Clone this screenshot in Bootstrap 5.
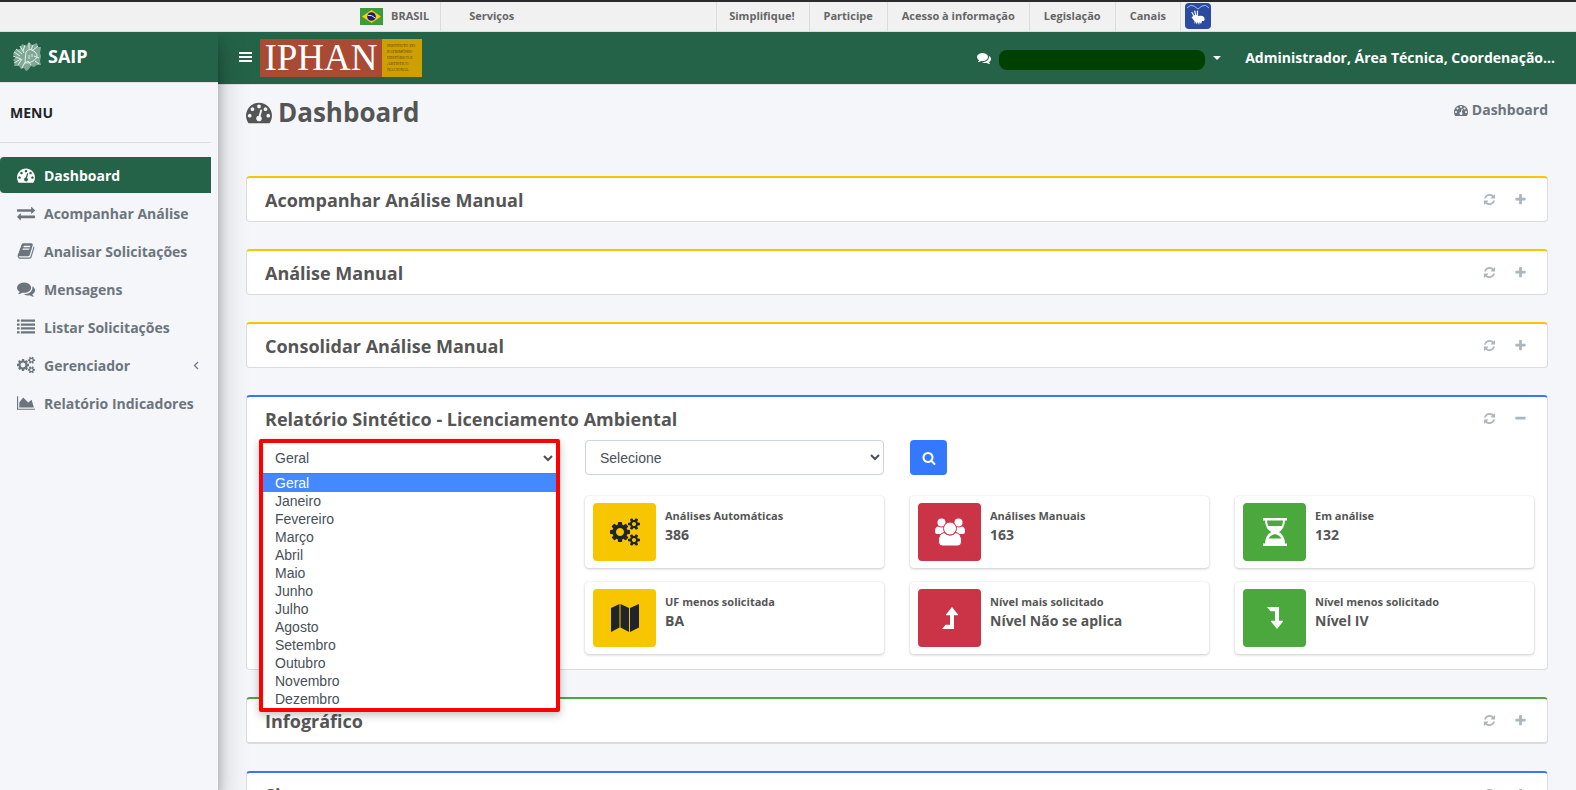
<!DOCTYPE html>
<html lang="pt-BR">
<head>
<meta charset="utf-8">
<meta name="viewport" content="width=device-width, initial-scale=1">
<title>SAIP - Dashboard</title>
<link href="https://cdn.jsdelivr.net/npm/bootstrap@5.3.0/dist/css/bootstrap.min.css" rel="stylesheet">
<style>
  :root { --saip-green: #246348; --ink: #555; --muted: #6c757d; }
  body { font-family: "Open Sans", sans-serif; font-size: 14px; color: var(--ink); background: #f4f6f9; }
  a { text-decoration: none; color: inherit; }
  svg { fill: currentColor; flex: none; display: block; }
  .shell { height: 100vh; overflow: hidden; }

  .gov-bar { height: 32px; flex: none; background: #f1f1f1; border-top: 2px solid #2b2a2c; border-bottom: 1px solid #dcdcdc; font-size: 11px; font-weight: 700; color: #666; }
  .gov-inner { width: 855px; margin-left: 360px; }
  .gov-brand { padding-right: 11px; gap: 8px; border-right: 1px solid #dcdcdc; }
  .gov-link { padding: 0 14px; border-right: 1px solid #dcdcdc; }
  .gov-link:first-child { padding-left: 12px; }
  .gov-links { border-left: 1px solid #dcdcdc; }

  .side { width: 218px; flex: none; z-index: 2; background: #f4f6f9; box-shadow: 0 14px 28px rgba(0,0,0,.25), 0 10px 10px rgba(0,0,0,.22); }
  .side-brand { height: 51px; padding: 0 0 2px 12px; gap: 7px; background: var(--saip-green); border-bottom: 1px solid #dee2e6; color: #fff; font-size: 18px; font-weight: 700; }
  .side-title { padding: 19px 10px; line-height: 21px; color: #212529; font-weight: 700; border-bottom: 1px solid #dcdfe3; margin: 0 7px 14px 0; }
  .side-nav { margin-right: 7px; }
  .side-nav .nav-link { height: 36px; margin-bottom: 2px; padding: 0 12px 0 17px; gap: 9px; font-weight: 700; color: var(--muted); border-radius: 4px 0 0 4px; white-space: nowrap; }
  .side-nav .nav-link.active { background: var(--saip-green); color: #fff; }

  .top { height: 53px; flex: none; padding: 0 21px 1px; background: var(--saip-green); border-bottom: 1px solid #dee2e6; color: #fff; font-weight: 700; }
  .logo { height: 38px; }
  .logo-name { width: 122px; background: #a84a34; color: #fff; font: 37px/38px "Liberation Serif", serif; }
  .logo-full { width: 40px; background: #cda000; color: #5c4208; font: 5px/6px "Liberation Serif", serif; font-variant: small-caps; padding: 4px 0 0 5px; white-space: nowrap; }
  .redacted { width: 206px; height: 20px; border-radius: 8px; background: #004000; }
  .plain-btn { border: 0; background: none; padding: 0; color: inherit; }

  .content-area { padding: 0 28px; }
  .page-head { height: 91px; padding-top: 7px; }
  .page-head h1 { font-size: 26px; line-height: 40px; font-weight: 700; gap: 6px; }
  .crumb { line-height: 36px; font-weight: 700; color: var(--muted); gap: 4px; }

  .panel { background: #fff; border: 1px solid #dcdcdc; border-top: 2px solid #f7c600; border-radius: 4px; margin-bottom: 27px; }
  .panel-blue { border-top-color: #3478ff; }
  .panel-green { border-top-color: #4ba83d; border-bottom-width: 2px; }
  .panel-head { height: 43px; padding: 0 20px 0 18px; }
  .panel-head h2 { font-size: 18px; line-height: 24px; font-weight: 700; }
  .tools { gap: 18px; color: #adb5bd; }
  .g-27 { --bs-gutter-x: 27px; --bs-gutter-y: 0; margin: 0; }
  .g-27 > * { padding-left: 13px; padding-right: 13px; }
  .totals { padding: 21px 0 1px; }

  .pick { height: 35px; padding: 0 14px 0 10px; border: 1px solid #ced4da; border-radius: 4px; background: #fff; color: #495057; font: 14px "Liberation Sans", sans-serif; width: 100%; }
  .go { width: 37px; height: 35px; padding: 0; background: #3478ff; color: #fff; border-radius: 4px; }
  .info { height: 72px; margin-bottom: 14px; padding: 7px 8px; gap: 9px; border-radius: 4px; background: #fff; box-shadow: 0 0 1px rgba(0,0,0,.125), 0 1px 3px rgba(0,0,0,.2); }
  .info-icon { width: 63px; border-radius: 4px; }
  .info-label { font-size: 11px; line-height: 18px; font-weight: 700; padding-top: 4px; }
  .info-value { font-size: 14px; line-height: 20px; font-weight: 700; }
  .bg-y { background: #f7c600; color: #212529; }
  .bg-r { background: #cb3346; color: #fff; }
  .bg-g { background: #4ba83d; color: #fff; }

  .picker { left: -1px; right: -1px; top: -1px; z-index: 3; border: 4px solid #f00; border-radius: 2px; background: #fff; box-shadow: 0 3px 8px rgba(0,0,0,.25); }
  .picker .pick { border: 0; height: 30px; padding-left: 8px; padding-right: 1px; display: block; }
  .month-list { margin: 0; padding: 0; list-style: none; border-top: 1px solid #777; font: 14px/18px "Liberation Sans", sans-serif; color: #495057; }
  .month-list button { width: 100%; text-align: left; padding: 0 12px; line-height: 18px; display: block; }
  .month-list .on { background: #4489ff; color: #fff; }
</style>
</head>
<body>
<svg width="0" height="0" class="position-absolute" aria-hidden="true">
  <symbol id="i-dash" viewBox="0 0 1792 1792"><path d="M384 1152q0-53-37.5-90.5t-90.5-37.5-90.5 37.5-37.5 90.5 37.5 90.5 90.5 37.5 90.5-37.5 37.5-90.5zm192-448q0-53-37.5-90.5t-90.5-37.5-90.5 37.5-37.5 90.5 37.5 90.5 90.5 37.5 90.5-37.5 37.5-90.5zm428 481l101-382q6-26-7.5-48.5t-38.5-29.5-48 6.5-30 39.5l-101 382q-60 5-107 43.5t-63 98.5q-20 77 20 146t117 89 146-20 89-117q16-60-6-117t-72-91zm660-33q0-53-37.5-90.5t-90.5-37.5-90.5 37.5-37.5 90.5 37.5 90.5 90.5 37.5 90.5-37.5 37.5-90.5zm-640-640q0-53-37.5-90.5t-90.5-37.5-90.5 37.5-37.5 90.5 37.5 90.5 90.5 37.5 90.5-37.5 37.5-90.5zm448 192q0-53-37.5-90.5t-90.5-37.5-90.5 37.5-37.5 90.5 37.5 90.5 90.5 37.5 90.5-37.5 37.5-90.5zm320 448q0 261-141 483-19 29-54 29h-1402q-35 0-54-29-141-221-141-483 0-182 71-348t191-286 286-191 348-71 348 71 286 191 191 286 71 348z"/></symbol>
  <symbol id="i-swap" viewBox="0 0 1792 1792"><path d="M1792 1184v192q0 13-9.5 22.5t-22.5 9.5h-1376v192q0 13-9.5 22.5t-22.5 9.5q-12 0-24-10l-319-320q-9-9-9-22 0-14 9-23l320-320q9-9 23-9 13 0 22.5 9.5t9.5 22.5v192h1376q13 0 22.5 9.5t9.5 22.5zm0-544q0 14-9 23l-320 320q-9 9-23 9-13 0-22.5-9.5t-9.5-22.5v-192h-1376q-13 0-22.5-9.5t-9.5-22.5v-192q0-13 9.5-22.5t22.5-9.5h1376v-192q0-14 9-23t23-9q12 0 24 10l319 319q9 9 9 23z"/></symbol>
  <symbol id="i-book" viewBox="0 0 1792 1792"><path d="M1703 478q40 57 18 129l-275 906q-19 64-76.5 107.5t-122.5 43.5h-923q-77 0-148.5-53.5t-99.5-131.5q-24-67-2-127 0-4 3-27t4-37q1-8-3-21.5t-3-19.5q2-11 8-21t16.5-23.5 16.5-23.5q23-38 45-91.5t30-91.5q3-10 .5-30t-.5-28q3-11 17-28t17-23q21-36 42-92t25-90q1-9-2.5-32t.5-28q4-13 22-30.5t22-22.5q19-26 42.5-84.5t27.5-96.5q1-8-3-25.5t-2-26.5q2-8 9-18t18-23 17-21q8-12 16.5-30.5t15-35 16-36 19.5-32 26.5-23.5 36-11.5 47.5 5.5l-1 3q38-9 51-9h761q74 0 114 56t18 130l-274 906q-36 119-71.5 153.5t-128.5 34.5h-869q-27 0-38 15-11 16-1 43 24 70 144 70h923q29 0 56-15.5t35-41.5l300-987q7-22 5-57 38 15 59 43zm-1064 2q-4 13 2 22.5t20 9.5h608q13 0 25.5-9.5t16.5-22.5l21-64q4-13-2-22.5t-20-9.5h-608q-13 0-25.5 9.5t-16.5 22.5zm-83 256q-4 13 2 22.5t20 9.5h608q13 0 25.5-9.5t16.5-22.5l21-64q4-13-2-22.5t-20-9.5h-608q-13 0-25.5 9.5t-16.5 22.5z"/></symbol>
  <symbol id="i-chat" viewBox="0 0 1792 1792"><path d="M1408 768q0 139-94 257t-256.5 186.5-353.5 68.5q-86 0-176-16-124 88-278 128-36 9-86 16h-3q-11 0-20.5-8t-11.5-21q-1-3-1-6.5t.5-6.5 2-6l2.5-5t3.5-5.5 4-5 4.5-5 4-4.5q5-6 23-25t26-29.5 22.5-29 25-38.5 20.5-44q-124-72-195-177t-71-224q0-139 94-257t256.5-186.5 353.5-68.5 353.5 68.5 256.5 186.5 94 257zm384 256q0 120-71 224.5t-195 176.5q10 24 20.5 44t25 38.5 22.5 29 26 29.5 23 25q1 1 4 4.5t4.5 5 4 5 3.5 5.5l2.5 5t2 6 .5 6.5-1 6.5q-3 14-13 22t-22 7q-50-7-86-16-154-40-278-128-90 16-176 16-271 0-472-132 58 4 88 4 161 0 309-45t264-129q125-92 192-212t67-254q0-77-23-152 129 71 204 178t75 230z"/></symbol>
  <symbol id="i-list" viewBox="0 0 1792 1792"><path d="M0 1312h256v224H0zM0 928h256v224H0zM0 544h256v224H0zM0 160h256v224H0zM384 1312h1408v224H384zM384 928h1408v224H384zM384 544h1408v224H384zM384 160h1408v224H384z"/></symbol>
  <symbol id="i-cogs" viewBox="0 0 1920 1792"><path d="M896 896q0-106-75-181t-181-75-181 75-75 181 75 181 181 75 181-75 75-181zm768 512q0-52-38-90t-90-38-90 38-38 90q0 53 37.5 90.5t90.5 37.5 90.5-37.5 37.5-90.5zm0-1024q0-52-38-90t-90-38-90 38-38 90q0 53 37.5 90.5t90.5 37.5 90.5-37.5 37.5-90.5zm-384 421v185q0 10-7 19.5t-16 10.5l-155 24q-11 35-32 76 34 48 90 115 7 11 7 20 0 12-7 19-23 30-82.5 89.5t-78.5 59.5q-11 0-21-7l-115-90q-37 19-77 31-11 108-23 155-7 24-30 24h-186q-11 0-20-7.5t-10-17.5l-23-153q-34-10-75-31l-118 89q-7 7-20 7-11 0-21-8-144-133-144-160 0-9 7-19 10-14 41-53t47-61q-23-44-35-82l-152-24q-10-1-17-9.5t-7-19.5v-185q0-10 7-19.5t16-10.5l155-24q11-35 32-76-34-48-90-115-7-11-7-20 0-12 7-20 22-30 82-89t79-59q11 0 21 7l115 90q34-18 77-32 11-108 23-154 7-24 30-24h186q11 0 20 7.5t10 17.5l23 153q34 10 75 31l118-89q8-7 20-7 11 0 21 8 144 133 144 160 0 8-7 19-12 16-42 54t-45 60q23 48 34 82l152 23q10 2 17 10.5t7 19.5zm640 533v140q0 16-149 31-12 27-30 52 51 113 51 138 0 4-4 7-122 71-124 71-8 0-46-47t-52-68q-20 2-30 2t-30-2q-14 21-52 68t-46 47q-2 0-124-71-4-3-4-7 0-25 51-138-18-25-30-52-149-15-149-31v-140q0-16 149-31 13-29 30-52-51-113-51-138 0-4 4-7 4-2 35-20t59-34 30-16q8 0 46 46.5t52 67.5q20-2 30-2t30 2q51-71 92-112l6-2q4 0 124 70 4 3 4 7 0 25-51 138 17 23 30 52 149 15 149 31zm0-1024v140q0 16-149 31-12 27-30 52 51 113 51 138 0 4-4 7-122 71-124 71-8 0-46-47t-52-68q-20 2-30 2t-30-2q-14 21-52 68t-46 47q-2 0-124-71-4-3-4-7 0-25 51-138-18-25-30-52-149-15-149-31v-140q0-16 149-31 13-29 30-52-51-113-51-138 0-4 4-7 4-2 35-20t59-34 30-16q8 0 46 46.5t52 67.5q20-2 30-2t30 2q51-71 92-112l6-2q4 0 124 70 4 3 4 7 0 25-51 138 17 23 30 52 149 15 149 31z"/></symbol>
  <symbol id="i-area" viewBox="0 0 2048 1792"><path d="M2048 1536v128h-2048v-1536h128v1408h1920zm-384-1024l256 896h-1664v-576l448-576 576 576z"/></symbol>
  <symbol id="i-refresh" viewBox="0 0 1792 1792"><path d="M1639 1056q0 5-1 7-64 268-268 434.5t-478 166.5q-146 0-282.5-55t-243.5-157l-129 129q-19 19-45 19t-45-19-19-45v-448q0-26 19-45t45-19h448q26 0 45 19t19 45-19 45l-137 137q71 66 161 102t187 36q134 0 250-65t186-179q11-17 53-117 8-23 30-23h192q13 0 22.5 9.5t9.5 22.5zm25-800v448q0 26-19 45t-45 19h-448q-26 0-45-19t-19-45 19-45l138-138q-148-137-349-137-134 0-250 65t-186 179q-11 17-53 117-8 23-30 23h-199q-13 0-22.5-9.5t-9.5-22.5v-7q65-268 270-434.5t480-166.5q146 0 284 55.5t245 156.5l130-129q19-19 45-19t45 19 19 45z"/></symbol>
  <symbol id="i-plus" viewBox="0 0 1792 1792"><path d="M1600 736v192q0 40-28 68t-68 28h-416v416q0 40-28 68t-68 28h-192q-40 0-68-28t-28-68v-416h-416q-40 0-68-28t-28-68v-192q0-40 28-68t68-28h416v-416q0-40 28-68t68-28h192q40 0 68 28t28 68v416h416q40 0 68 28t28 68z"/></symbol>
  <symbol id="i-minus" viewBox="0 0 1792 1792"><path d="M1600 736v192q0 40-28 68t-68 28h-1216q-40 0-68-28t-28-68v-192q0-40 28-68t68-28h1216q40 0 68 28t28 68z"/></symbol>
  <symbol id="i-search" viewBox="0 0 1792 1792"><path d="M1216 832q0-185-131.5-316.5t-316.5-131.5-316.5 131.5-131.5 316.5 131.5 316.5 316.5 131.5 316.5-131.5 131.5-316.5zm512 832q0 52-38 90t-90 38q-54 0-90-38l-343-342q-179 124-399 124-143 0-273.5-55.5t-225-150-150-225-55.5-273.5 55.5-273.5 150-225 225-150 273.5-55.5 273.5 55.5 225 150 150 225 55.5 273.5q0 220-124 399l343 343q37 37 37 90z"/></symbol>
</svg>

<div class="shell d-flex flex-column">
  <div class="gov-bar d-flex">
    <div class="gov-inner d-flex align-items-stretch">
      <a href="#" class="gov-brand d-flex align-items-center">
        <svg width="23" height="17" viewBox="0 0 23 17"><path fill="#3c9b3c" d="M0 0h23v17H0z"/><path fill="#f6d20c" d="M2 8.500 11.500 2 21 8.500 11.500 15z"/><circle cx="11.500" cy="8.500" r="4.300" fill="#1f1a78"/><path d="M7.600 7.300q4.500-.6 7.600 2.800" stroke="#dfe6f5" stroke-width="1" fill="none"/></svg>
        BRASIL</a>
      <a href="#" class="d-flex align-items-center ms-4 ps-1">Serviços</a>
      <nav class="gov-links d-flex align-items-stretch ms-auto">
        <a href="#" class="gov-link d-flex align-items-center">Simplifique!</a>
        <a href="#" class="gov-link d-flex align-items-center">Participe</a>
        <a href="#" class="gov-link d-flex align-items-center">Acesso à informação</a>
        <a href="#" class="gov-link d-flex align-items-center">Legislação</a>
        <a href="#" class="gov-link d-flex align-items-center">Canais</a>
      </nav>
      <a href="#" class="d-flex align-items-start ms-1 me-1" aria-label="VLibras">
        <svg width="26" height="28" viewBox="0 -1 26 28"><rect width="26" height="26" rx="4" fill="#2a4b9f"/><path d="M2 5q3-4 7-2l4 3 4-3q4-2 7 2" fill="none" stroke="#a9bbe6" stroke-width="1"/><path d="M9.500 14 7 9.500M11 13 9.700 8M12.500 13V8" stroke="#fff" stroke-width="1.200" stroke-linecap="round"/><path fill="#fff" d="M8 13q3-2 5 0 4-1 6 1 1.500 3-.5 4l-1.500 0-1 3-1.200-2-.8 3-1.200-3-1.300 2.500-.7-3L9.500 21l0-3q-2-2-3-4l1-.3z"/></svg></a>
    </div>
  </div>

  <div class="d-flex flex-grow-1 overflow-hidden">
    <aside class="side position-relative">
      <a href="#" class="side-brand d-flex align-items-center">
        <svg width="29" height="29" viewBox="0 0 29 29"><path fill="#7fa897" d="M3 8l5-1 2-5 4 2 3-4 3 3 5-2 1 4 3 0-1 6 1 3-1 5 1 4-4 0-3 2-3-1-3 4-2 1-2-3-3 1-2-3-5 0 1-4-2-2 3-3-3-3z"/><path stroke="#e4efe9" stroke-width="1" fill="none" d="M2 10l6 4M4 7l6 5M1 14l8 3M2 21l7-4M6 23l4-6M8 4l4 7M13 3l-2 6M17 1l0 6M21 3l-2 5M26 4l-6 5M14 10q4-5 9 0t-2 9-8 0zM12 22l4-3 3 4M10 26l3-6M22 14l5 2M23 19l4 3M17 13v4M20 12v3"/></svg>
        SAIP</a>
      <div class="side-title">MENU</div>
      <nav class="side-nav nav flex-column">
        <a href="#" class="nav-link active d-flex align-items-center"><svg width="18" height="18"><use href="#i-dash"/></svg>Dashboard</a>
        <a href="#" class="nav-link d-flex align-items-center"><svg width="18" height="18"><use href="#i-swap"/></svg>Acompanhar Análise</a>
        <a href="#" class="nav-link d-flex align-items-center"><svg width="18" height="18"><use href="#i-book"/></svg>Analisar Solicitações</a>
        <a href="#" class="nav-link d-flex align-items-center"><svg width="18" height="18"><use href="#i-chat"/></svg>Mensagens</a>
        <a href="#" class="nav-link d-flex align-items-center"><svg width="18" height="18"><use href="#i-list"/></svg>Listar Solicitações</a>
        <a href="#" class="nav-link d-flex align-items-center"><svg width="18" height="18"><use href="#i-cogs"/></svg>Gerenciador
          <svg class="ms-auto" width="6" height="9" viewBox="0 0 6 9"><path d="M5 1 1.500 4.500 5 8" fill="none" stroke="currentColor" stroke-width="1.200"/></svg></a>
        <a href="#" class="nav-link d-flex align-items-center"><svg width="18" height="18"><use href="#i-area"/></svg>Relatório Indicadores</a>
      </nav>
    </aside>

    <div class="d-flex flex-column flex-grow-1 overflow-hidden">
      <header class="top d-flex align-items-center">
        <button type="button" class="plain-btn" aria-label="Menu"><svg width="13" height="11" viewBox="0 0 13 11"><path d="M0 0h13v2H0zM0 4h13v2H0zM0 8h13v2H0z"/></svg></button>
        <a href="#" class="logo d-flex ms-2">
          <span class="logo-name text-center">IPHAN</span>
          <span class="logo-full">Instituto do<br>Patrimônio<br>Histórico e<br>Artístico<br>Nacional</span>
        </a>
        <a href="#" class="ms-auto" aria-label="Mensagens"><svg width="14" height="14"><use href="#i-chat"/></svg></a>
        <button type="button" class="plain-btn d-flex align-items-center ms-2" aria-label="Usuário">
          <span class="redacted mt-1"></span>
          <svg class="ms-2" width="8" height="4" viewBox="0 0 8 4"><path d="M0 0h8L4 4z"/></svg>
        </button>
        <a href="#" class="ms-4">Administrador, Área Técnica, Coordenação...</a>
      </header>

      <main class="content-area">
        <div class="page-head d-flex justify-content-between align-items-start">
          <h1 class="d-flex align-items-center m-0"><svg width="26" height="26"><use href="#i-dash"/></svg>Dashboard</h1>
          <a href="#" class="crumb d-flex align-items-center"><svg width="14" height="14"><use href="#i-dash"/></svg>Dashboard</a>
        </div>

        <section class="panel">
          <div class="panel-head d-flex align-items-center justify-content-between">
            <h2 class="m-0">Acompanhar Análise Manual</h2>
            <div class="tools d-flex">
              <button type="button" class="plain-btn" aria-label="Atualizar"><svg width="13" height="13"><use href="#i-refresh"/></svg></button>
              <button type="button" class="plain-btn" aria-label="Expandir"><svg width="13" height="13"><use href="#i-plus"/></svg></button>
            </div>
          </div>
        </section>
        <section class="panel">
          <div class="panel-head d-flex align-items-center justify-content-between">
            <h2 class="m-0">Análise Manual</h2>
            <div class="tools d-flex">
              <button type="button" class="plain-btn" aria-label="Atualizar"><svg width="13" height="13"><use href="#i-refresh"/></svg></button>
              <button type="button" class="plain-btn" aria-label="Expandir"><svg width="13" height="13"><use href="#i-plus"/></svg></button>
            </div>
          </div>
        </section>
        <section class="panel">
          <div class="panel-head d-flex align-items-center justify-content-between">
            <h2 class="m-0">Consolidar Análise Manual</h2>
            <div class="tools d-flex">
              <button type="button" class="plain-btn" aria-label="Atualizar"><svg width="13" height="13"><use href="#i-refresh"/></svg></button>
              <button type="button" class="plain-btn" aria-label="Expandir"><svg width="13" height="13"><use href="#i-plus"/></svg></button>
            </div>
          </div>
        </section>

        <section class="panel panel-blue">
          <div class="panel-head d-flex align-items-center justify-content-between">
            <h2 class="m-0">Relatório Sintético - Licenciamento Ambiental</h2>
            <div class="tools d-flex">
              <button type="button" class="plain-btn" aria-label="Atualizar"><svg width="13" height="13"><use href="#i-refresh"/></svg></button>
              <button type="button" class="plain-btn" aria-label="Recolher"><svg width="13" height="13"><use href="#i-minus"/></svg></button>
            </div>
          </div>
          <div class="row g-27">
            <div class="col-3">
              <div class="position-relative">
                <div class="picker position-absolute">
                  <select class="pick" aria-label="Mês"><option>Geral</option></select>
                  <ul class="month-list">
                    <li><button type="button" class="plain-btn on">Geral</button></li>
                    <li><button type="button" class="plain-btn">Janeiro</button></li>
                    <li><button type="button" class="plain-btn">Fevereiro</button></li>
                    <li><button type="button" class="plain-btn">Março</button></li>
                    <li><button type="button" class="plain-btn">Abril</button></li>
                    <li><button type="button" class="plain-btn">Maio</button></li>
                    <li><button type="button" class="plain-btn">Junho</button></li>
                    <li><button type="button" class="plain-btn">Julho</button></li>
                    <li><button type="button" class="plain-btn">Agosto</button></li>
                    <li><button type="button" class="plain-btn">Setembro</button></li>
                    <li><button type="button" class="plain-btn">Outubro</button></li>
                    <li><button type="button" class="plain-btn">Novembro</button></li>
                    <li><button type="button" class="plain-btn">Dezembro</button></li>
                  </ul>
                </div>
              </div>
            </div>
            <div class="col-3"><select class="pick" aria-label="Unidade"><option>Selecione</option></select></div>
            <div class="col-3"><button type="button" class="btn go d-flex align-items-center justify-content-center" aria-label="Pesquisar"><svg width="14" height="14"><use href="#i-search"/></svg></button></div>
          </div>
          <div class="row g-27 totals">
            <div class="col-3 offset-3">
              <div class="info d-flex">
                <div class="info-icon bg-y d-flex align-items-center justify-content-center"><svg width="30" height="28"><use href="#i-cogs"/></svg></div>
                <div><div class="info-label">Análises Automáticas</div><div class="info-value">386</div></div>
              </div>
            </div>
            <div class="col-3">
              <div class="info d-flex">
                <div class="info-icon bg-r d-flex align-items-center justify-content-center"><svg width="30" height="28" viewBox="0 0 30 28"><circle cx="6.500" cy="4.500" r="4"/><circle cx="23.500" cy="4.500" r="4"/><path d="M3 8.500q3.500 2 6 0V16H2Q0 16 0 13q0-4 3-4.500zM27 8.500q-3.500 2-6 0V16h7q2 0 2-3 0-4-3-4.500z"/><path stroke="#cb3346" d="M9 14.500q-6 1.500-5.500 9.500 0 4 4 4h15q4 0 4-4 .5-8-5.500-9.500-6 5-12 0z"/><circle cx="15" cy="10.500" r="6.500" stroke="#cb3346"/></svg></div>
                <div><div class="info-label">Análises Manuais</div><div class="info-value">163</div></div>
              </div>
            </div>
            <div class="col-3">
              <div class="info d-flex">
                <div class="info-icon bg-g d-flex align-items-center justify-content-center"><svg width="24" height="28" viewBox="0 0 24 28"><path d="M0 0h24v2.500H0zM0 25.500h24V28H0z"/><path fill="none" stroke="currentColor" stroke-width="2" d="M3 2q0 8.500 7 12-7 3.500-7 12M21 2q0 8.500-7 12 7 3.500 7 12"/><path d="M4.500 8h15q-2 4-5 6 3 2 5.500 7H4q2.500-5 5.500-7-3-2-5-6zM3 20.500h18V26H3z"/><path fill="#4ba83d" d="M5.500 20.500q2-3.500 6.500-4.500 4.500 1 6.500 4.500z"/></svg></div>
                <div><div class="info-label">Em análise</div><div class="info-value">132</div></div>
              </div>
            </div>
            <div class="col-3 offset-3">
              <div class="info d-flex">
                <div class="info-icon bg-y d-flex align-items-center justify-content-center"><svg width="28" height="28" viewBox="0 0 28 28"><path d="M0 4 8.500 0v23.500L0 28zM9.500 0 18 4v24l-8.500-4.500zM19 4l9-4v23.500L19 28z"/></svg></div>
                <div><div class="info-label">UF menos solicitada</div><div class="info-value">BA</div></div>
              </div>
            </div>
            <div class="col-3">
              <div class="info d-flex">
                <div class="info-icon bg-r d-flex align-items-center justify-content-center"><svg width="16" height="22" viewBox="0 0 16 22"><path d="M10 0l6 7.500q.3.800-.5.800H12V22H0l3.500-4.200H8V8.300H4.500q-.8 0-.5-.8z"/></svg></div>
                <div><div class="info-label">Nível mais solicitado</div><div class="info-value">Nível Não se aplica</div></div>
              </div>
            </div>
            <div class="col-3">
              <div class="info d-flex">
                <div class="info-icon bg-g d-flex align-items-center justify-content-center"><svg width="16" height="22" viewBox="0 0 16 22"><path d="M10 22l6-7.500q.3-.8-.5-.8H12V0H0l3.500 4.200H8v9.500H4.500q-.8 0-.5.800z"/></svg></div>
                <div><div class="info-label">Nível menos solicitado</div><div class="info-value">Nível IV</div></div>
              </div>
            </div>
          </div>
        </section>

        <section class="panel panel-green">
          <div class="panel-head d-flex align-items-center justify-content-between">
            <h2 class="m-0">Infográfico</h2>
            <div class="tools d-flex">
              <button type="button" class="plain-btn" aria-label="Atualizar"><svg width="13" height="13"><use href="#i-refresh"/></svg></button>
              <button type="button" class="plain-btn" aria-label="Expandir"><svg width="13" height="13"><use href="#i-plus"/></svg></button>
            </div>
          </div>
        </section>
        <section class="panel panel-blue">
          <div class="panel-head d-flex align-items-center justify-content-between">
            <h2 class="m-0">Si</h2>
            <div class="tools d-flex">
              <button type="button" class="plain-btn" aria-label="Atualizar"><svg width="13" height="13"><use href="#i-refresh"/></svg></button>
              <button type="button" class="plain-btn" aria-label="Expandir"><svg width="13" height="13"><use href="#i-plus"/></svg></button>
            </div>
          </div>
        </section>
      </main>
    </div>
  </div>
</div>
<script src="https://cdn.jsdelivr.net/npm/bootstrap@5.3.0/dist/js/bootstrap.bundle.min.js"></script>
</body>
</html>
